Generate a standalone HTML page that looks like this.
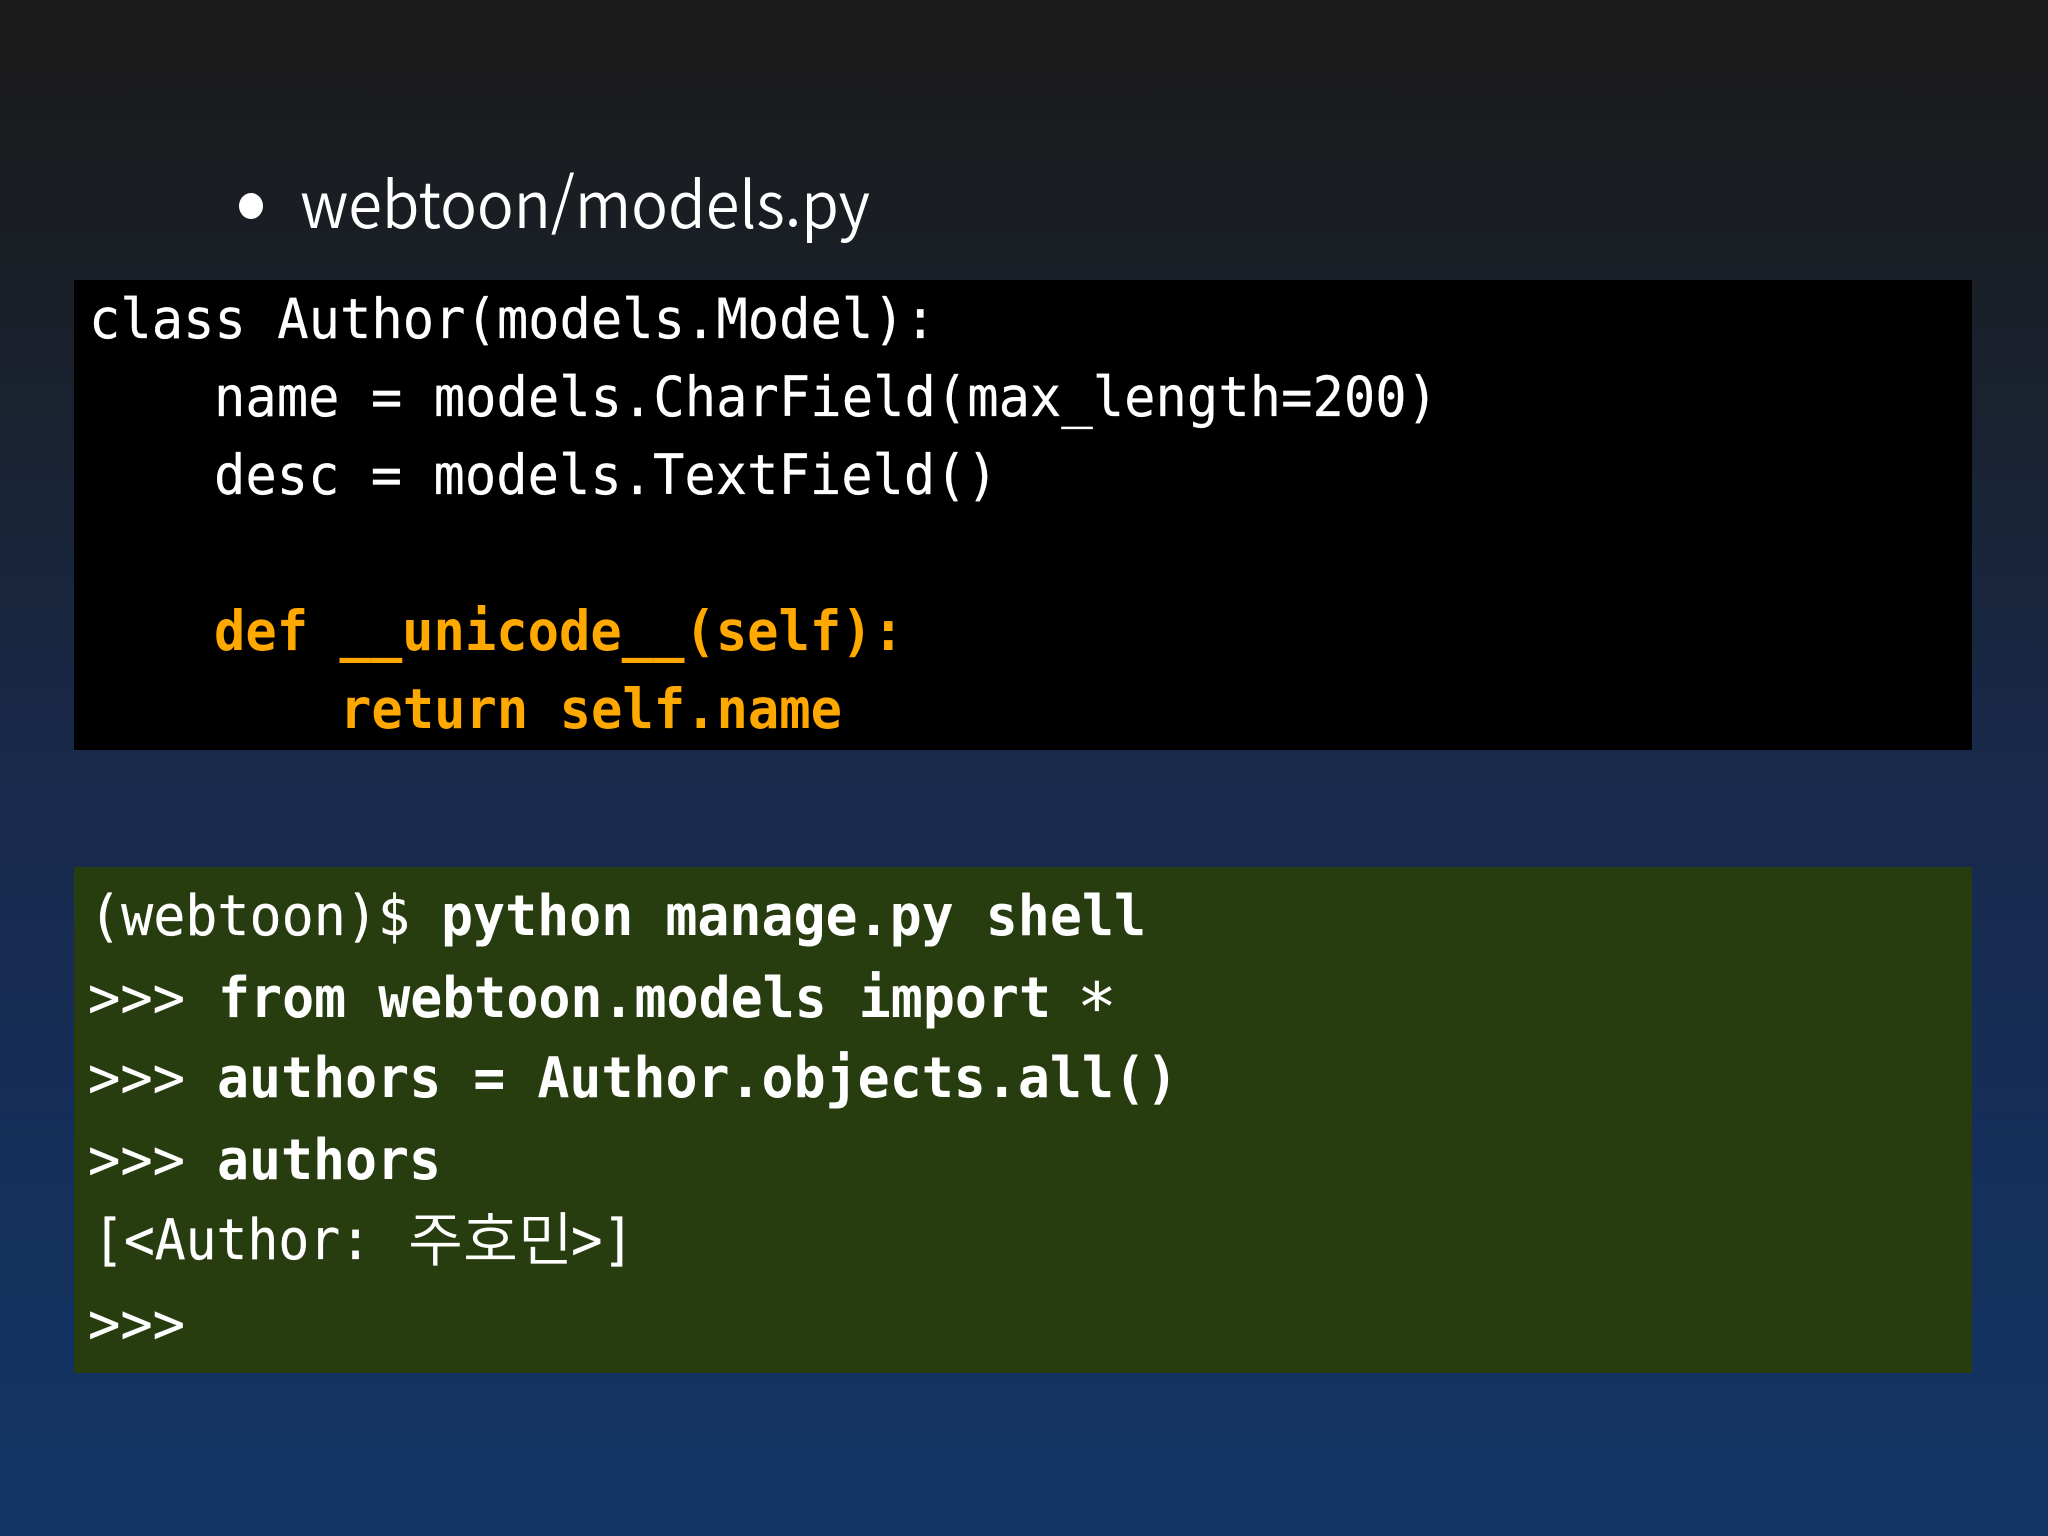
<!DOCTYPE html>
<html lang="ko">
<head>
<meta charset="utf-8">
<title>webtoon/models.py</title>
<style>
html,body{margin:0;padding:0;width:2048px;height:1536px;overflow:hidden;background:#13325f}
svg{display:block}
.m{font-family:"DejaVu Sans Mono","Noto Sans CJK KR",monospace;fill:#fff;white-space:pre}
.a{font-size:55px}
.b{font-size:56px}
.n{stroke:#fff;stroke-width:.25px}
.o{fill:#ffa800;font-weight:700}
.w{font-weight:700}
.h{font-family:"Noto Sans CJK KR","Liberation Sans",sans-serif;font-size:64px;font-weight:350;fill:#fff}
.k{font-family:"Noto Sans CJK KR",sans-serif;font-size:59px;fill:#fff;font-weight:350}
</style>
</head>
<body>
<svg xmlns="http://www.w3.org/2000/svg" width="2048" height="1536" viewBox="0 0 2048 1536">
<defs>
<linearGradient id="g" x1="0" y1="0" x2="0" y2="1">
<stop offset="0" stop-color="#1a1a1a"/>
<stop offset="0.04" stop-color="#1a1a1b"/>
<stop offset="0.2" stop-color="#1a2029"/>
<stop offset="0.5" stop-color="#18294a"/>
<stop offset="0.75" stop-color="#152f5a"/>
<stop offset="1" stop-color="#133566"/>
</linearGradient>
</defs>
<rect width="2048" height="1536" fill="url(#g)"/>
<rect x="74" y="280" width="1898" height="470" fill="#000"/>
<rect x="74" y="867" width="1898" height="506" fill="#283d0f"/>

<ellipse cx="251" cy="206" rx="12" ry="13" fill="#fff"/>
<text class="h" x="300" y="228" textLength="570" lengthAdjust="spacingAndGlyphs">webtoon/models.py</text>

<text class="m a n" x="89" y="338" textLength="847" lengthAdjust="spacingAndGlyphs">class Author(models.Model):</text>
<text class="m a n" x="214" y="416" textLength="1224" lengthAdjust="spacingAndGlyphs">name = models.CharField(max_length=200)</text>
<text class="m a n" x="214" y="494" textLength="784" lengthAdjust="spacingAndGlyphs">desc = models.TextField()</text>
<text class="m a o" x="214" y="650" textLength="690" lengthAdjust="spacingAndGlyphs">def __unicode__(self):</text>
<text class="m a o" x="340" y="728" textLength="502" lengthAdjust="spacingAndGlyphs">return self.name</text>

<text class="m b n" x="89" y="935" textLength="321" lengthAdjust="spacingAndGlyphs">(webtoon)$</text>
<text class="m b w" x="441" y="935" textLength="705" lengthAdjust="spacingAndGlyphs">python manage.py shell</text>
<text class="m b n" x="88" y="1017" textLength="97" lengthAdjust="spacingAndGlyphs">&gt;&gt;&gt;</text>
<text class="m b w" x="218" y="1017" textLength="833" lengthAdjust="spacingAndGlyphs">from webtoon.models import</text>
<text class="m b n" style="font-size:66px" x="1077" y="1030">*</text>
<text class="m b n" x="88" y="1097" textLength="97" lengthAdjust="spacingAndGlyphs">&gt;&gt;&gt;</text>
<text class="m b w" x="217" y="1097" textLength="961" lengthAdjust="spacingAndGlyphs">authors = Author.objects.all()</text>
<text class="m b n" x="88" y="1179" textLength="97" lengthAdjust="spacingAndGlyphs">&gt;&gt;&gt;</text>
<text class="m b w" x="217" y="1179" textLength="224" lengthAdjust="spacingAndGlyphs">authors</text>
<text class="m b n" x="93" y="1259" textLength="278" lengthAdjust="spacingAndGlyphs">[&lt;Author:</text>
<text class="k" x="408" y="1261" textLength="165" lengthAdjust="spacingAndGlyphs">주호민</text>
<text class="m b n" x="571" y="1259" textLength="63" lengthAdjust="spacingAndGlyphs">&gt;]</text>
<text class="m b n" x="88" y="1343" textLength="97" lengthAdjust="spacingAndGlyphs">&gt;&gt;&gt;</text>
</svg>
</body>
</html>
